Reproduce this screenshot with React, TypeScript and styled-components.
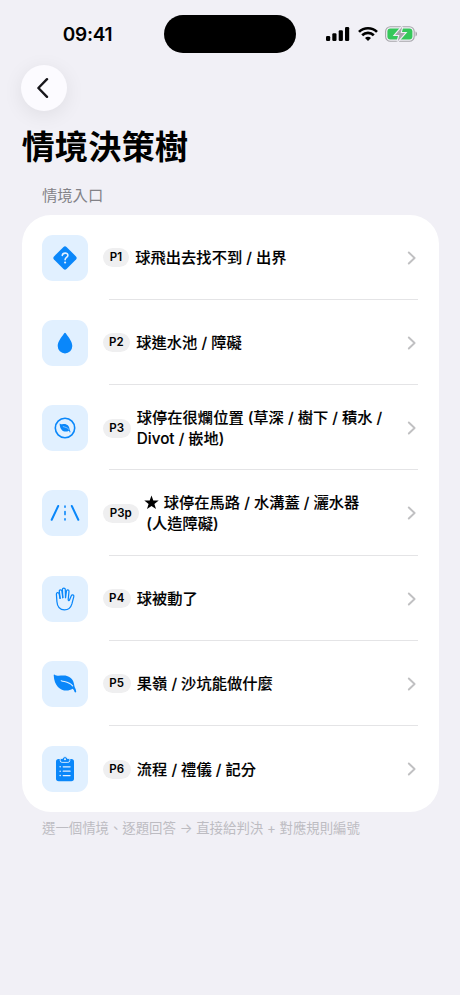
import React from 'react';
import styled, { createGlobalStyle } from 'styled-components';

const GlobalStyle = createGlobalStyle`
  * { box-sizing: border-box; }
  body { margin: 0; background: #f1f0f6; }
`;

const blue = '#0a87fa';

const Screen = styled.main`
  display: flex;
  flex-direction: column;
  height: 995px;
  width: 460px;
  overflow: hidden;
  background: #f1f0f6;
  color: #000;
  font-family: Inter, 'Noto Sans CJK TC', sans-serif;
`;

const StatusBar = styled.header`
  display: grid;
  grid-template-columns: 164px 132px 1fr;
  height: 65px;
  padding-top: 15px;
  flex: none;
`;

const Clock = styled.time`
  padding-left: 11px;
  height: 38px;
  line-height: 39px;
  text-align: center;
  font-size: 19px;
  font-weight: 600;
  letter-spacing: -0.25px;
`;

const Island = styled.div`
  height: 38px;
  border-radius: 19px;
  background: #000;
`;

const Indicators = styled.div`
  height: 38px;
  display: flex;
  align-items: center;
  padding-left: 30px;
  gap: 7.5px;
`;

const BackButton = styled.button`
  width: 46px;
  height: 46px;
  margin-left: 21px;
  padding: 0;
  flex: none;
  display: grid;
  place-items: center;
  border: 0;
  border-radius: 50%;
  background: #fcfbff;
  box-shadow: 0 4px 20px rgba(0, 0, 0, 0.08);
`;

const Title = styled.h1`
  margin: 12px 0 0 21.5px;
  height: 49px;
  line-height: 49px;
  font-size: 33.3px;
  font-weight: 700;
  flex: none;
`;

const SectionLabel = styled.h2`
  margin: 11px 0 0 42px;
  height: 32px;
  line-height: 26px;
  font-size: 15.3px;
  font-weight: 400;
  color: #838287;
  flex: none;
`;

const Card = styled.ul`
  list-style: none;
  margin: 0 21.5px;
  padding: 0;
  border-radius: 29px;
  background: #fff;
  flex: none;
`;

const Row = styled.li`
  display: grid;
  grid-template-columns: 46px 1fr 9px;
  column-gap: 15px;
  align-items: center;
  height: 85.25px;
  padding: 0 22.5px 0 20.5px;
  background: linear-gradient(#e4e4e6, #e4e4e6) 87px calc(100% - 0.5px) / calc(100% - 108px) 1px no-repeat;
  &:last-child { background: none; }
`;

const Tile = styled.span`
  width: 46px;
  height: 46px;
  display: grid;
  place-items: center;
  border-radius: 11px;
  background: #e1f0ff;
`;

const Content = styled.div`
  display: flex;
  align-items: center;
  gap: 6.3px;
  min-width: 0;
`;

const Badge = styled.span<{ $width: number }>`
  width: ${(p) => p.$width}px;
  height: 19px;
  line-height: 19px;
  flex: none;
  text-align: center;
  border-radius: 10px;
  background: #efeff0;
  font-size: 11.5px;
  font-weight: 600;
  letter-spacing: 0.1px;
`;

const Label = styled.span`
  font-size: 15.28px;
  line-height: 21px;
  font-weight: 500;
  white-space: nowrap;
  -webkit-text-stroke: 0.12px #000;
`;

const Line = styled.span<{ $indent?: number }>`
  display: block;
  padding-left: ${(p) => p.$indent ?? 0}px;
`;

const Footnote = styled.p`
  margin: 6px 0 0 42px;
  line-height: 21px;
  font-size: 13.4px;
  font-weight: 400;
  color: #bdbcc2;
  white-space: nowrap;
`;

const SignalIcon = () => (
  <svg width="24" height="16" viewBox="0 0 24 16">
    <rect x="0" y="10" width="4.2" height="5" rx="1.2" />
    <rect x="6.3" y="7.2" width="4.2" height="7.8" rx="1.2" />
    <rect x="12.7" y="4.2" width="4.2" height="10.8" rx="1.2" />
    <rect x="19" y="1" width="4.2" height="14" rx="1.2" />
  </svg>
);

const WifiIcon = () => (
  <svg width="20" height="16" viewBox="0 0 20 16" fill="none" stroke="#000" strokeWidth="2.7">
    <path d="M1 5.9C6.1 1 13.9 1 19 5.9" />
    <path d="M4.2 9.2c3.3-3.1 8.3-3.1 11.6 0" />
    <path d="M7 11.9c1.7-1.6 4.3-1.6 6 0L10 15Z" fill="#000" stroke="none" />
  </svg>
);

const BatteryIcon = () => (
  <svg width="33" height="16" viewBox="0 0 33 16">
    <rect x=".6" y=".8" width="28.6" height="14.4" rx="4.7" fill="none" stroke="#a6a5aa" strokeWidth="1.1" />
    <path d="M30.5 5.6c2 .6 2 4.2 0 4.8Z" fill="#a6a5aa" />
    <rect x="2.4" y="2.5" width="25" height="11" rx="3" fill="#35c75a" />
    <path d="M17.2.7 10.1 9h4.3l-1.8 6.5L20 7h-4.4Z" fill="#a6a5aa" stroke="#f1f0f6" strokeWidth="2.2" paintOrder="stroke" />
  </svg>
);

const BackIcon = () => (
  <svg width="14" height="22" viewBox="0 0 14 22" fill="none" stroke="#17161b" strokeWidth="2.4" strokeLinecap="round" strokeLinejoin="round">
    <path d="M10 2.2 1.4 11l8.6 8.8" />
  </svg>
);

const ChevronIcon = () => (
  <svg width="9" height="14" viewBox="0 0 9 14" fill="none" stroke="#c0c0c2" strokeWidth="1.9" strokeLinecap="round" strokeLinejoin="round">
    <path d="m1.8 1.5 5.8 5.5-5.8 5.5" />
  </svg>
);

const LeafShape = () => (
  <>
    <path d="M1.6 1.7C4.5 4 9.6 1.6 14.6 3.2c5 1.6 6.4 5.9 6.7 9.4.2 2 1.8 3.5 1.9 5.9.1 1.2-1.4 1.2-1.7.2-.3-1.3-.9-2.2-1.8-2.9C12.5 20.2 1.4 16.7.7 2.2.7 1.6 1.2 1.4 1.6 1.7Z" fill={blue} />
    <path d="M8.2 7.7c4.2 1.4 8 1.3 11.4 5.1" fill="none" stroke="#e1f0ff" strokeWidth="1.1" strokeLinecap="round" />
  </>
);

const QuestionIcon = () => (
  <svg width="26" height="26" viewBox="0 0 26 26">
    <path d="M11.5 2q1.5-1.3 3 0l9.5 9.4q1.4 1.6 0 3.2l-9.5 9.4q-1.5 1.3-3 0L2 14.6q-1.4-1.6 0-3.2Z" fill={blue} />
    <path d="M10.3 10.4c.3-3 5.6-3.1 5.6-.1 0 2.1-2.8 2.1-2.8 4.4" fill="none" stroke="#e1f0ff" strokeWidth="1.6" strokeLinecap="round" />
    <circle cx="13.1" cy="17.5" r="1.1" fill="#e1f0ff" />
  </svg>
);

const DropIcon = () => (
  <svg width="16" height="22" viewBox="0 0 16 22">
    <path d="M7.2 1.2q.8-1.1 1.6 0C11.9 5.6 15.3 9.6 15.3 14.1a7.3 7.3 0 0 1-14.6 0C.7 9.6 4.1 5.6 7.2 1.2Z" fill={blue} />
  </svg>
);

const CircleLeafIcon = () => (
  <svg width="22" height="22" viewBox="0 0 22 22">
    <circle cx="11" cy="11" r="9.7" fill="none" stroke={blue} strokeWidth="1.6" />
    <g transform="translate(5.3 5.8) scale(.48 .5)"><LeafShape /></g>
  </svg>
);

const RoadIcon = () => (
  <svg width="30" height="18" viewBox="0 0 30 18" fill="none" stroke={blue} strokeWidth="2" strokeLinecap="round">
    <path d="M8.2 2 1.7 15.8M21.8 2l6.5 13.8" />
    <path d="M15 2v1.3M15 7.6v3M15 14.7v1.3" strokeWidth="1.6" />
  </svg>
);

const HandIcon = () => (
  <svg width="20" height="24" viewBox="0 0 20 24" fill="none" stroke={blue} strokeWidth="1.25" strokeLinecap="round" strokeLinejoin="round">
    <path d="M5.1 11.4 4.1 6.7C3.7 5 1.2 5.4 1.4 7.2l.5 7.3c.4 5.4 3 8.4 7.6 8.4 4 0 6.3-2.2 7.4-6l1.9-7.2c.5-1.9-1.8-2.6-2.6-.8l-1.7 4c-.4 1-1.4.8-1.3-.3l.8-8.2c.2-1.8-2.2-2.1-2.5-.4l-1 6.6" />
    <path d="m5.1 11.4-.8-7.1c-.2-1.8 2.3-2 2.6-.3l.9 6.6" />
    <path d="M7.8 10.6 7.4 2.6c0-2 2.9-2 2.9 0l.2 8" />
  </svg>
);

const LeafIcon = () => (
  <svg width="24" height="21" viewBox="0 0 24 21"><LeafShape /></svg>
);

const ClipboardIcon = () => (
  <svg width="18" height="26" viewBox="0 0 18 26">
    <rect x="0" y="2.9" width="18" height="22.4" rx="2.7" fill={blue} />
    <path d="M4.2 2.4h2.4a2.5 2.5 0 0 1 4.8 0h2.4v2.1q0 1.9-1.9 1.9H6.1q-1.9 0-1.9-1.9Z" fill={blue} stroke="#e1f0ff" strokeWidth=".9" />
    <circle cx="9" cy="3.2" r="1" fill="#e1f0ff" />
    <g fill="none" stroke="#e1f0ff" strokeWidth="1.2" strokeLinecap="round">
      <path d="M7.2 10.8h6.9M7.2 15.2h6.9M7.2 19.6h6.9" />
      <path d="M4.1 10.8h.1M4.1 15.2h.1M4.1 19.6h.1" strokeWidth="1.5" />
    </g>
  </svg>
);

const StarIcon = styled.svg`
  width: 15px;
  height: 15px;
  margin: 0 4.5px 0 -0.5px;
  vertical-align: -1.5px;
`;

const Star = () => (
  <StarIcon viewBox="0 0 15 15">
    <path d="m7.5.4 1.8 5.1 5.4.1-4.3 3.3 1.6 5.2-4.5-3.1L3 14.1l1.6-5.2L.3 5.6l5.4-.1Z" />
  </StarIcon>
);

interface Entry {
  code: string;
  badge: number;
  icon: React.ReactNode;
  lines: { text: string; indent?: number; star?: boolean }[];
}

const entries: Entry[] = [
  { code: 'P1', badge: 26, icon: <QuestionIcon />, lines: [{ text: '球飛出去找不到 / 出界' }] },
  { code: 'P2', badge: 27, icon: <DropIcon />, lines: [{ text: '球進水池 / 障礙' }] },
  { code: 'P3', badge: 27.5, icon: <CircleLeafIcon />, lines: [{ text: '球停在很爛位置 (草深 / 樹下 / 積水 /' }, { text: 'Divot / 嵌地)' }] },
  { code: 'P3p', badge: 35.5, icon: <RoadIcon />, lines: [{ text: '球停在馬路 / 水溝蓋 / 灑水器', star: true }, { text: '(人造障礙)', indent: 1.5 }] },
  { code: 'P4', badge: 27.5, icon: <HandIcon />, lines: [{ text: '球被動了' }] },
  { code: 'P5', badge: 27.5, icon: <LeafIcon />, lines: [{ text: '果嶺 / 沙坑能做什麼' }] },
  { code: 'P6', badge: 27.5, icon: <ClipboardIcon />, lines: [{ text: '流程 / 禮儀 / 記分' }] },
];

export default function App() {
  return (
    <Screen>
      <GlobalStyle />
      <StatusBar>
        <Clock>09:41</Clock>
        <Island />
        <Indicators>
          <SignalIcon />
          <WifiIcon />
          <BatteryIcon />
        </Indicators>
      </StatusBar>
      <BackButton aria-label="返回"><BackIcon /></BackButton>
      <Title>情境決策樹</Title>
      <SectionLabel>情境入口</SectionLabel>
      <Card>
        {entries.map((e) => (
          <Row key={e.code}>
            <Tile>{e.icon}</Tile>
            <Content>
              <Badge $width={e.badge}>{e.code}</Badge>
              <Label>
                {e.lines.map((l) => (
                  <Line key={l.text} $indent={l.indent}>
                    {l.star && <Star />}
                    {l.text}
                  </Line>
                ))}
              </Label>
            </Content>
            <ChevronIcon />
          </Row>
        ))}
      </Card>
      <Footnote>選一個情境、逐題回答 → 直接給判決 + 對應規則編號</Footnote>
    </Screen>
  );
}
